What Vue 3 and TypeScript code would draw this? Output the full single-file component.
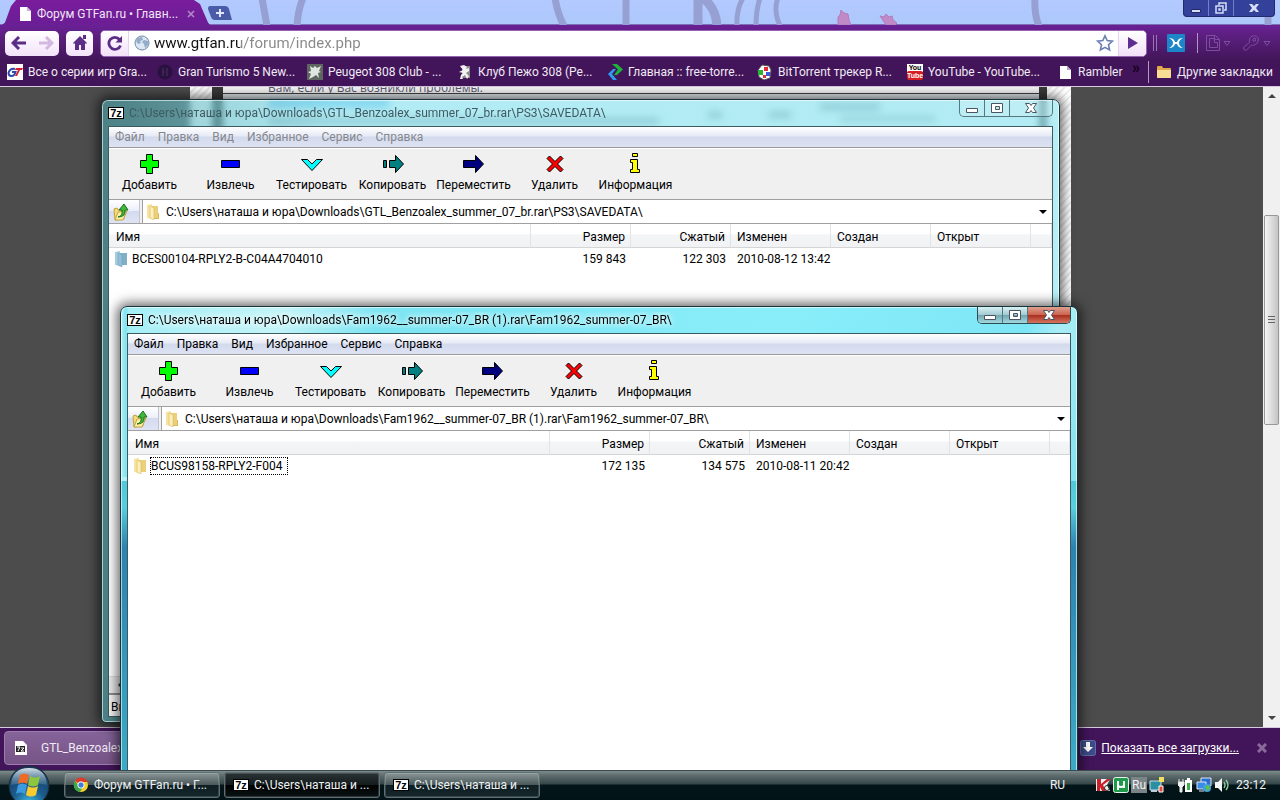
<script setup lang="ts">
import { ref } from 'vue'

interface Bookmark { icon: string; label: string }
interface ArchiveWindow {
  id: string
  active: boolean
  path: string
  folder: string
  size: string
  packed: string
  modified: string
}

const url = ref('www.gtfan.ru/forum/index.php')

const bookmarks: Bookmark[] = [
  { icon: 'gt', label: 'Все о серии игр Gra...' },
  { icon: 'gt5', label: 'Gran Turismo 5 New...' },
  { icon: 'peugeot', label: 'Peugeot 308 Club - ...' },
  { icon: 'lion', label: 'Клуб Пежо 308 (Pe...' },
  { icon: 'free', label: 'Главная :: free-torre...' },
  { icon: 'bit', label: 'BitTorrent трекер R...' },
  { icon: 'youtube', label: 'YouTube - YouTube...' },
  { icon: 'page', label: 'Rambler' },
]

const windows = ref<ArchiveWindow[]>([
  {
    id: 'savedata',
    active: false,
    path: 'C:\\Users\\наташа и юра\\Downloads\\GTL_Benzoalex_summer_07_br.rar\\PS3\\SAVEDATA\\',
    folder: 'BCES00104-RPLY2-B-C04A4704010',
    size: '159 843',
    packed: '122 303',
    modified: '2010-08-12 13:42',
  },
  {
    id: 'fam',
    active: true,
    path: 'C:\\Users\\наташа и юра\\Downloads\\Fam1962__summer-07_BR (1).rar\\Fam1962_summer-07_BR\\',
    folder: 'BCUS98158-RPLY2-F004',
    size: '172 135',
    packed: '134 575',
    modified: '2010-08-11 20:42',
  },
])

const menu = ['Файл', 'Правка', 'Вид', 'Избранное', 'Сервис', 'Справка']
const tools = [
  { icon: 'add', label: 'Добавить' },
  { icon: 'extract', label: 'Извлечь' },
  { icon: 'test', label: 'Тестировать' },
  { icon: 'copy', label: 'Копировать' },
  { icon: 'move', label: 'Переместить' },
  { icon: 'delete', label: 'Удалить' },
  { icon: 'info', label: 'Информация' },
]
const tasks = [
  { icon: 'chrome', label: 'Форум GTFan.ru • Г...', active: false },
  { icon: '7z', label: 'C:\\Users\\наташа и ...', active: true },
  { icon: '7z', label: 'C:\\Users\\наташа и ...', active: false },
]
</script>

<template>
  <div class="desktop">
    <div class="workspace">
      <section class="browser">
        <header class="tabstrip">
          <svg class="vines" width="1280" height="25" viewBox="0 0 1280 25" fill="none" aria-hidden="true">
            <g stroke="#97a0d2" stroke-width="7">
              <path d="M262 -2L267 26M303 -2Q298 10 297 26M555 -2Q557 12 564 26M626 -2V26M1035 -2Q1034 14 1039 26M1268 16V26" />
              <path d="M698 -2V26M703 -2Q716 8 717 26" stroke-width="9" />
              <path d="M743 -2Q736 10 737 26M760 -2Q756 10 756 26M778 -2Q773 10 780 26" stroke-width="5" />
            </g>
            <g fill="#c08ac6" stroke="#b07cc0">
              <path d="M838 25v-8l2-2 1-5 3 3 4 1 1 6 2 5zM880 16l4 1 2-3 3 3 3-1 1 4 4 3-2 2h-9z" />
            </g>
          </svg>
          <div class="tab">
            <svg width="16" height="16" viewBox="0 0 16 16" aria-hidden="true"><path d="M3 1h7l4 4v10H3z" fill="#fff" /><path d="M10 1l4 4h-4z" fill="#c9b4d6" /></svg>
            <span class="tab-label">Форум GTFan.ru • Главн...</span>
            <button class="plain" aria-label="Закрыть вкладку">
              <svg width="8" height="8" viewBox="0 0 8 8"><path d="M1 1l6 6M7 1L1 7" stroke="#b38ac9" stroke-width="1.6" /></svg>
            </button>
          </div>
          <button class="new-tab" aria-label="Новая вкладка">
            <svg width="24" height="14" viewBox="0 0 24 14"><path d="M2 0h15q3 0 4 3l3 11H7q-3 0-4-3L0 3q0-3 2-3z" fill="#4a5ca8" /><path d="M12 3v8M8 7h8" stroke="#dfe5fb" stroke-width="2" /></svg>
          </button>
          <div class="sys-buttons">
            <button aria-label="Свернуть"><svg width="12" height="12" viewBox="0 0 12 12"><path d="M1.500 7.500h9v3h-9z" fill="#d5dcf5" stroke="#20296a" /></svg></button>
            <button aria-label="Восстановить"><svg width="12" height="12" viewBox="0 0 12 12" fill="none" stroke="#d5dcf5" stroke-width="1.500"><path d="M4 3V1h7v7H9" /><path d="M1 4h7v7H1zM4 7h1v1H4z" /></svg></button>
            <button class="wide" aria-label="Закрыть"><svg width="12" height="12" viewBox="0 0 12 12"><path d="M1 2h3l2 2 2-2h3L8 6l3 4H8L6 8l-2 2H1l3-4z" fill="#d5dcf5" /></svg></button>
          </div>
        </header>

        <div class="toolbar">
          <div class="pill">
            <button aria-label="Назад"><svg width="16" height="14" viewBox="0 0 16 14"><path d="M8 1L2 7l6 6M2 7h13" fill="none" stroke="#5b2d86" stroke-width="3" /></svg></button>
            <button aria-label="Вперёд"><svg width="16" height="14" viewBox="0 0 16 14"><path d="M8 1l6 6-6 6M14 7H1" fill="none" stroke="#d3b8e2" stroke-width="3" /></svg></button>
          </div>
          <button class="pill home" aria-label="Домашняя страница">
            <svg width="16" height="16" viewBox="0 0 16 16"><path d="M8 1l7 7-1 1-1-1v7H9v-5H7v5H3V8L2 9 1 8zM11 0h3v4h-3z" fill="#5b2d86" /></svg>
          </button>
          <form class="omnibox" @submit.prevent>
            <button type="button" class="seg reload" aria-label="Обновить">
              <svg width="16" height="16" viewBox="0 0 16 16"><path d="M12.500 4.500A6 6 0 1 0 13.500 10.500" fill="none" stroke="#5b2d86" stroke-width="2.800" /><path d="M15 1v6.500H8.500z" fill="#5b2d86" /></svg>
            </button>
            <svg width="16" height="16" viewBox="0 0 16 16" aria-hidden="true"><circle cx="8" cy="8" r="7" fill="#dce9f5" stroke="#7188a5" /><path d="M3 3l5-1 1 3-3 1 1 2-3 1-2-3zM10 5l4 1v4l-3 3-1-4-2-2z" fill="#93adc8" /></svg>
            <input v-model="url" class="url" type="text" aria-label="Адрес" />
            <button type="button" class="plain" aria-label="Добавить закладку">
              <svg width="18" height="18" viewBox="0 0 18 18"><path d="M9 1.800l2.200 4.800 5.200.6-3.900 3.500 1.100 5.200L9 13.300l-4.600 2.600 1.100-5.200L1.600 7.200l5.200-.6z" fill="#fff" stroke="#6d7fb5" stroke-width="1.600" /></svg>
            </button>
            <button type="submit" class="seg go" aria-label="Перейти">
              <svg width="10" height="12" viewBox="0 0 10 12"><path d="M0 0l10 6-10 6z" fill="#5f2d91" /></svg>
            </button>
          </form>
          <span class="bars"></span>
          <button class="plain ext" aria-label="Расширение">
            <svg width="18" height="18" viewBox="0 0 18 18"><rect width="18" height="18" rx="1" fill="#1d86c8" /><path d="M2 4q5 0 6 4h2q1-4 6-4-4 2-4 5t4 5q-5 0-6-4H8q-1 4-6 4 4-2 4-5T2 4z" fill="#fff" /></svg>
          </button>
          <span class="bar"></span>
          <button class="plain" aria-label="Страница">
            <svg width="27" height="16" viewBox="0 0 27 16" fill="none" stroke="#7d4d9e"><path d="M1.500.5h9l4 4v11h-13z" /><path d="M4.500 3.500h5v4h3v5h-8zM9.500.5v4h5M19 6.500h6l-3 4z" /></svg>
          </button>
          <button class="plain" aria-label="Настройки">
            <svg width="29" height="16" viewBox="0 0 29 16" fill="none" stroke="#7d4d9e"><path d="M1.500 12.500l6-5q-1-5 3-6.500 5-1 6 3 0 5-4 6-2 .5-3 0l-5 5q-3 1-3-2.500zM11 4l2-1 1 2-1 1-2 0zM22 6.500h6l-3 4z" /></svg>
          </button>
        </div>

        <nav class="bookmarks">
          <a v-for="b in bookmarks" :key="b.label" href="#" class="bookmark">
            <svg width="16" height="16" viewBox="0 0 16 16" aria-hidden="true">
              <template v-if="b.icon === 'gt'"><rect width="16" height="16" fill="#fff" /><path d="M8 5Q3 4 1.500 9q0 3 3 3 3 0 4-4H5" fill="none" stroke="#2a4aa8" stroke-width="2" /><path d="M9 4h7l-1 2h-2l-3 6H8l3-6H8z" fill="#d8202c" /></template>
              <template v-else-if="b.icon === 'gt5'"><circle cx="8" cy="8" r="7.500" fill="#2b1042" /><path d="M6 4v8M10 4v8M6 8h2" stroke="#43285a" stroke-width="1.500" /></template>
              <template v-else-if="b.icon === 'peugeot'"><rect width="16" height="16" fill="#5f665f" /><path d="M3 2l3 2 2-2 2 2 4-2-2 5 2 1-3 1 1 5-3-3-3 2-4 2 2-5-3-2 3-1z" fill="#dfe5df" /></template>
              <template v-else-if="b.icon === 'lion'"><path d="M5 2h8v12H5z" fill="#8a8a8a" /><path d="M3 2l4-1 3 2-1 2 3-1v3l-3 2 3 3-2 3-2-4-3 2 1 2H3l1-4 2-2-4-1 4-2z" fill="#f2f2f2" /></template>
              <template v-else-if="b.icon === 'free'"><path d="M5 0h5l6 5.500L10 11H7l4-5.500z" fill="#1db43a" /><path d="M6 5h3L5 10l5 6H6L1 10z" fill="#2f9bf0" /></template>
              <template v-else-if="b.icon === 'bit'"><path d="M5 1l7 1 2 4-1 8-6 2-5-3-1-7z" fill="#fff" stroke="#555" /><path d="M1 6h5v5H1z" fill="#29b332" /><path d="M7 3h4v4H7z" fill="#e02b34" /><path d="M9 8h4v4H9z" fill="#3b5bd8" /><path d="M6 11h3v3H6z" fill="#d33" /></template>
              <template v-else-if="b.icon === 'youtube'"><rect width="16" height="8" fill="#fff" /><rect y="7" width="16" height="9" rx="2" fill="#d81f1f" /><text x="8" y="6" class="yt" fill="#000">You</text><text x="8" y="14" class="yt" fill="#fff">Tube</text></template>
              <template v-else><path d="M3 2h7l4 4v9H3z" fill="#fff" /><path d="M10 2l4 4h-4z" fill="#b7a2c5" /></template>
            </svg>
            <span>{{ b.label }}</span>
          </a>
          <button class="plain more" aria-label="Ещё закладки">»</button>
          <span class="bar"></span>
          <a href="#" class="bookmark other">
            <svg width="16" height="16" viewBox="0 0 16 16" aria-hidden="true"><path d="M1 3q0-1 1-1h4l1 2h7q1 0 1 1v8q0 1-1 1H2q-1 0-1-1z" fill="#e2a94a" /><path d="M1 6h14v7q0 1-1 1H2q-1 0-1-1z" fill="#fbdc95" /></svg>
            <span>Другие закладки</span>
          </a>
        </nav>

        <main class="viewport">
          <div class="page">
            <div class="content">
              <p class="notice">Вам, если у Вас возникли проблемы.</p>
              <div class="forum-row">
                <i class="b-link"></i><i class="b-text"></i><i class="b-num"></i><i class="b-num second"></i><i class="b-author"></i>
              </div>
            </div>
          </div>
          <div class="scrollbar">
            <svg width="8" height="5" viewBox="0 0 8 5"><path d="M0 5l4-4 4 4z" fill="#444" /></svg>
            <span class="thumb"></span>
            <svg width="8" height="5" viewBox="0 0 8 5"><path d="M0 0l4 4 4-4z" fill="#444" /></svg>
          </div>
        </main>

        <footer class="downloads">
          <button class="download">
            <svg width="16" height="16" viewBox="0 0 16 16" aria-hidden="true"><path d="M2 1h8l4 4v10H2z" fill="#fff" /><path d="M3 6h9v6H3z" fill="#222" /><path d="M4 7h3l-2 4M8 8h3l-3 3h3" stroke="#fff" fill="none" /></svg>
            <span>GTL_Benzoalex</span>
          </button>
          <div class="all">
            <svg width="16" height="16" viewBox="0 0 16 16" aria-hidden="true"><rect x=".5" y=".5" width="15" height="15" rx="2" fill="#3c4c8c" stroke="#6070a0" /><path d="M6 2h4v5h3l-5 5-5-5h3z" fill="#fff" /></svg>
            <a href="#">Показать все загрузки...</a>
            <button class="plain" aria-label="Закрыть панель загрузок"><svg width="10" height="10" viewBox="0 0 10 10"><path d="M1 1l8 8M9 1L1 9" stroke="#8a6a9a" stroke-width="3" /></svg></button>
          </div>
        </footer>
      </section>

      <section v-for="w in windows" :key="w.id" class="window" :class="[w.id, { active: w.active }]">
        <header class="title">
          <span class="sevenz" aria-hidden="true">7z</span>
          <h2>{{ w.path }}</h2>
          <div class="caption">
            <button aria-label="Свернуть"><svg width="14" height="12" viewBox="0 0 14 12"><path d="M1.500 6.500h11v4h-11z" fill="#fff" stroke="#4b5560" /></svg></button>
            <button aria-label="Развернуть"><svg width="14" height="12" viewBox="0 0 14 12"><path d="M1.500 1.500h11v9h-11zM5.500 4.500v3h4v-3z" fill="#fff" fill-rule="evenodd" stroke="#4b5560" /></svg></button>
            <button class="close" aria-label="Закрыть"><svg width="14" height="12" viewBox="0 0 14 12"><path d="M1.500 1.500h4L7 3.500l1.500-2h4L9.500 6l3 4.500h-4L7 8.500l-1.500 2h-4l3-4.500z" fill="#fff" stroke="#4b5560" /></svg></button>
          </div>
        </header>
        <div class="client">
          <nav class="menu"><button v-for="m in menu" :key="m">{{ m }}</button></nav>
          <div class="tools">
            <button v-for="t in tools" :key="t.icon">
              <svg width="24" height="24" viewBox="0 0 24 24" stroke="#000" aria-hidden="true">
                <path v-if="t.icon === 'add'" d="M8.500 2.500h6v6h6v7h-6v6h-6v-6h-6v-7h6z" fill="#0f0" />
                <path v-else-if="t.icon === 'extract'" d="M2.500 8.500h18v7h-18z" fill="#00f" />
                <path v-else-if="t.icon === 'test'" d="M1.500 7.500h6l4.500 4.500 4.500-4.500h6L12 18.500z" fill="#0ff" />
                <path v-else-if="t.icon === 'copy'" d="M2.500 8.500h3v7h-3zM8.500 8.500h6v-5l8 8.500-8 8.500v-5h-6z" fill="#008080" />
                <path v-else-if="t.icon === 'move'" d="M1.500 8.500h12v-5l8 8.500-8 8.500v-5h-12z" fill="#000080" />
                <path v-else-if="t.icon === 'delete'" d="M4 6.500L6.500 4l5.500 5.500L17.500 4 20 6.500 14.500 12l5.500 5.500-2.500 2.500-5.500-5.500L6.500 20 4 17.500 9.500 12z" fill="#f00" />
                <path v-else d="M8.500 1.500h5v3h-5zM6.500 7.500h7v10h2v3h-9v-3h2v-7h-2z" fill="#ff0" />
              </svg>
              <span>{{ t.label }}</span>
            </button>
          </div>
          <div class="address">
            <button class="up" aria-label="Вверх">
              <svg width="18" height="18" viewBox="0 0 18 18"><path d="M2 6l3-1 1 2h6v9l-9 1z" fill="#f4dc7c" stroke="#c4a23c" /><path d="M3 17l3-8 9-1-4 9z" fill="#fcf0a8" stroke="#c4a23c" /><path d="M6 14q5-1 4-7H7l5-6 4 6h-3q1 7-7 7z" fill="#3cb83c" stroke="#1c701c" /></svg>
            </button>
            <label class="combo">
              <svg width="16" height="16" viewBox="0 0 16 16" aria-hidden="true"><path d="M2 1l5-1v15l-5-1z" fill="#f7e3a0" /><path d="M7 2h6v12H7z" fill="#eccf79" /><path d="M5 2l4 2v12l-4-2z" fill="#fbeebf" stroke="#dcb95c" stroke-width=".6" /><path d="M13 9h1v6H9v-1h4z" fill="#d9b75f" /></svg>
              <input v-model="w.path" type="text" aria-label="Путь" />
              <button type="button" class="plain" aria-label="Список папок"><svg width="8" height="4" viewBox="0 0 8 4"><path d="M0 0h8L4 4z" fill="#000" /></svg></button>
            </label>
          </div>
          <div class="list">
            <table>
              <colgroup><col class="c-name" /><col v-for="n in 5" :key="n" class="c-data" /><col /></colgroup>
              <thead><tr><th>Имя</th><th class="num">Размер</th><th class="num">Сжатый</th><th>Изменен</th><th>Создан</th><th>Открыт</th><th></th></tr></thead>
              <tbody>
                <tr>
                  <td>
                    <div class="entry">
                      <svg width="14" height="16" viewBox="0 0 14 16" aria-hidden="true">
                        <path d="M1 1l5-1v15l-5-1z" :fill="w.active ? '#f7e3a0' : '#a5cde0'" /><path d="M6 2h7v12H6z" :fill="w.active ? '#eccf79' : '#7fb0c8'" /><path d="M4 2l4 2v12l-4-2z" :fill="w.active ? '#fbeebf' : '#94bfd6'" :stroke="w.active ? '#dcb95c' : '#6fa3bd'" stroke-width=".6" />
                      </svg>
                      <span>{{ w.folder }}</span>
                    </div>
                  </td>
                  <td class="num">{{ w.size }}</td><td class="num">{{ w.packed }}</td><td>{{ w.modified }}</td><td></td><td></td><td></td>
                </tr>
              </tbody>
            </table>
          </div>
          <div class="hscroll"><svg width="5" height="8" viewBox="0 0 5 8"><path d="M5 0v8L1 4z" fill="#333" /></svg></div>
          <div class="status">Выделено</div>
        </div>
      </section>
    </div>

    <footer class="taskbar">
      <button class="start" aria-label="Пуск">
        <svg width="42" height="42" viewBox="0 0 42 42">
          <defs>
            <radialGradient id="orb" cx=".5" cy=".95" r=".9"><stop offset="0" stop-color="#3ec0e8" /><stop offset=".45" stop-color="#1b5c8e" /><stop offset="1" stop-color="#16395c" /></radialGradient>
            <linearGradient id="gloss" x2="0" y2="1"><stop offset="0" stop-color="#eaf3f8" stop-opacity=".9" /><stop offset="1" stop-color="#8fb0c8" stop-opacity=".25" /></linearGradient>
          </defs>
          <circle cx="21" cy="21" r="20" fill="url(#orb)" stroke="#1c2c34" />
          <path d="M3 20Q4 3 21 3t18 17Q21 15 3 20z" fill="url(#gloss)" />
          <path d="M12 10q4-3 9 0l-2 9q-4-3-9 0z" fill="#ee6a26" /><path d="M22 11q5 3 10 0l-2 9q-5 3-10 0z" fill="#8cc63c" />
          <path d="M10 20q4-3 9 0l-2 9q-5-3-9 0z" fill="#3b9ae0" /><path d="M20 21q5 3 10 0l-2 9q-5 3-10 0z" fill="#fccb2e" />
        </svg>
      </button>
      <button v-for="(t, i) in tasks" :key="i" class="task" :class="{ pressed: t.active }">
        <svg v-if="t.icon === 'chrome'" width="16" height="16" viewBox="0 0 16 16" aria-hidden="true"><circle cx="8" cy="8" r="7" fill="#f8d02c" /><path d="M8 8L2 4a7 7 0 0 1 12.500 1H8z" fill="#dc3a2c" /><path d="M2 4a7 7 0 0 0 5 11l3-5-4-1z" fill="#3ea648" /><circle cx="8" cy="8" r="3.200" fill="#3d7fd8" stroke="#fff" /></svg>
        <span v-else class="sevenz" aria-hidden="true">7z</span>
        <span>{{ t.label }}</span>
      </button>
      <span class="lang">RU</span>
      <div class="tray">
        <svg width="16" height="16" viewBox="0 0 16 16" aria-hidden="true"><path d="M1 2h14l-3 6 3 6H1z" fill="#f2f2f2" /><path d="M2 2h4v5l6-5h4L8 8l3 6H7L5 10v4H2z" fill="#c8202a" /><circle cx="12" cy="11" r="2.500" fill="none" stroke="#333" /></svg>
        <svg width="16" height="16" viewBox="0 0 16 16" aria-hidden="true"><rect x=".5" y=".5" width="15" height="15" rx="2" fill="#1f9a4a" stroke="#e8f5ec" /><path d="M5 4v9M5 4v4q0 2 3 2t3-2V4v6h1" fill="none" stroke="#fff" stroke-width="2" /></svg>
        <span class="ru">Ru</span>
        <svg width="16" height="16" viewBox="0 0 16 16" aria-hidden="true"><path d="M1 4h11v9H1z" fill="#2a8fa0" stroke="#cde" /><path d="M10 0h5v5h-5z" fill="#f0e060" /><path d="M10 9h4v6h-4z" fill="#e04a30" stroke="#fff" /><path d="M2 14h6" stroke="#bcd" stroke-width="2" /></svg>
        <svg class="apart" width="16" height="16" viewBox="0 0 16 16" aria-hidden="true"><path d="M7 3h2V1h3v2h2v12H7z" fill="#fff" /><path d="M9 6h3v7H9z" fill="#3fae4c" /><path d="M1 2v3M5 2v3M0 5h6v3L4 10v5H2v-5L0 8z" fill="#f2f2f2" stroke="#e8e8e8" /></svg>
        <svg width="16" height="16" viewBox="0 0 16 16" aria-hidden="true"><path d="M5 1h10v8H5z" fill="#2a6fd0" stroke="#dfe8f5" /><path d="M1 5h9v7H1zM3 14h5" fill="#3a8be8" stroke="#dfe8f5" /><circle cx="11" cy="11" r="4" fill="#3fa0e0" /><path d="M9 9l4-1 1 4-3 2z" fill="#5cc04a" /></svg>
        <svg width="16" height="16" viewBox="0 0 16 16" aria-hidden="true"><path d="M1 5h3l4-4v14l-4-4H1z" fill="#f2f5f5" /><path d="M10 5q2 3 0 6M12 3q4 5 0 10" fill="none" stroke="#8fd6a0" stroke-width="1.300" /></svg>
      </div>
      <time>23:12</time>
    </footer>
  </div>
</template>

<style>
body { margin: 0; overflow: hidden; background: #4c4c4c; }
</style>

<style scoped>
* { box-sizing: border-box; }
button { font: inherit; color: inherit; border: 0; background: none; padding: 0; margin: 0; display: flex; align-items: center; justify-content: center; }
svg { display: block; flex: none; }
.desktop { height: 100vh; display: flex; flex-direction: column; overflow: hidden; font: 12px/16px Roboto, "Noto Sans", sans-serif; color: #000; white-space: nowrap; }
.workspace { flex: 1; min-height: 0; position: relative; overflow: hidden; }
.browser { height: 100%; display: flex; flex-direction: column; }

.tabstrip { height: 25px; flex: none; display: flex; position: relative; padding-left: 2px; background: linear-gradient(#b3c9ff, #adc8fb); border-bottom: 1px solid #7a6fb4; }
.vines { position: absolute; left: 0; top: 0; }
.tab { position: relative; width: 208px; height: 25px; padding: 2px 15px 0 15px; display: flex; align-items: center; gap: 4px; color: #f0e6f7; background: linear-gradient(#7a1c9c, #6b1e95); clip-path: polygon(0 100%, 3px 90%, 9px 6px, 14px 0, 192px 0, 198px 4px, 206px 90%, 100% 100%); }
.tab-label { flex: 1; overflow: hidden; }
.new-tab { position: relative; align-self: flex-start; margin-top: 6px; margin-left: -2px; }
.sys-buttons { position: relative; margin-left: auto; margin-right: 5px; height: 17px; display: flex; background: #33419a; border: 1px solid #1f2a70; border-top: 0; border-radius: 0 0 4px 4px; }
.sys-buttons button { width: 25px; border-right: 1px solid #7480c4; }
.sys-buttons .wide { width: 40px; border: 0; }

.toolbar { flex: none; height: 35px; padding: 4px 9px 3px 5px; display: flex; align-items: center; background: linear-gradient(#6b2096, #5c1f80 30%, #42165a); }
.pill { height: 25px; display: flex; border-radius: 5px; background: linear-gradient(#fff, #f3e3fa); margin-right: 7px; }
.pill button { width: 27px; }
.home { width: 27px; }
.omnibox { flex: 1; height: 27px; display: flex; align-items: center; background: #fff; border: 1px solid #9463b4; border-radius: 5px; overflow: hidden; }
.seg { width: 28px; height: 100%; background: linear-gradient(#fff, #f3e0fa); }
.reload { border-right: 1px solid #e4d3ee; margin-right: 5px; }
.go { border-left: 1px solid #e4d3ee; margin-left: 4px; }
.url { flex: 1; min-width: 0; border: 0; outline: 0; padding: 0; margin-left: 4px; height: 23px; font: 15px/22px Roboto, "Noto Sans", sans-serif; color: transparent; background: linear-gradient(90deg, #111 86px, #888 86px); -webkit-background-clip: text; background-clip: text; }
.bars { width: 4px; height: 16px; margin: 0 10px 0 6px; border: solid #9a74b0; border-width: 0 1px; }
.ext { margin-right: 12px; }
.bar { width: 1px; height: 20px; background: #b496c4; margin-right: 7px; }
.toolbar .plain + .plain { margin-left: 10px; }

.bookmarks { flex: none; height: 26px; padding: 0 7px 2px; display: flex; align-items: center; background: #42155a; color: #f1eaf5; }
.bookmark { width: 150px; display: flex; align-items: center; gap: 5px; color: inherit; text-decoration: none; }
.bookmark:nth-child(8) { width: auto; margin-right: auto; }
.more { align-self: flex-start; color: #160020; font-size: 16px; font-weight: 700; margin-right: 8px; }
.bookmarks .bar { height: 22px; }
.other { width: auto; }
.yt { font: 700 7px "Liberation Sans", sans-serif; text-anchor: middle; }

.viewport { flex: 1; min-height: 0; display: flex; background: #4c4c4c; border-top: 1px solid #d8c8e0; }
.page { width: 881px; margin-left: 190px; padding: 0 24px 0 22px; background: repeating-linear-gradient(135deg, #fff 0 3px, #ececec 3px 5px); overflow: hidden; }
.content { height: 100%; background: #fff; border: solid #3a3a3a; border-width: 0 8px 0 11px; }
.notice { margin: 0; height: 7px; padding-left: 45px; overflow: hidden; font-family: "Open Sans", "Noto Sans", sans-serif; line-height: 1px; color: #5a5a70; border-bottom: 1px solid #444; background: #f7f7f7; }
.forum-row { position: relative; height: 40px; background: #e6edf2; }
.forum-row i { position: absolute; height: 6px; filter: blur(2px); background: #7d9099; }
.forum-row .b-link { left: 46px; top: 7px; width: 120px; background: #3aa0e0; }
.forum-row .b-text { left: 46px; top: 24px; width: 390px; }
.forum-row .b-num { left: 485px; top: 18px; width: 14px; }
.forum-row .b-num.second { left: 546px; width: 22px; }
.forum-row .b-author { left: 597px; top: 10px; width: 60px; box-shadow: 20px 12px 0 #9aacb4, 55px 12px 0 #9aacb4; }
.scrollbar { width: 17px; margin-left: auto; padding: 6px 0; display: flex; flex-direction: column; align-items: center; background: #f0f0f0; }
.thumb { width: 15px; height: 210px; margin: 117px 0 auto; border: 1px solid #989898; border-radius: 2px; background: repeating-linear-gradient(#666 0 1px, transparent 1px 3px) center / 7px 8px no-repeat, linear-gradient(90deg, #f5f5f5, #dcdcdc 50%, #c4c4c8); }

.downloads { flex: none; height: 43px; padding: 3px 13px 5px 4px; display: flex; align-items: center; background: #42155a; border-top: 1px solid #d8c8e0; }
.download { width: 220px; height: 34px; padding-left: 8px; justify-content: flex-start; gap: 12px; background: linear-gradient(#85649a, #775486); border: 1px solid #9b7cae; border-radius: 4px; color: #f1eaf5; }
.all { margin-left: auto; display: flex; align-items: center; gap: 5px; }
.all a { color: #fff; margin-right: 13px; }

.window { position: absolute; padding: 0 6px 5px; display: flex; flex-direction: column; border: 1px solid #16343a; border-radius: 7px 7px 5px 5px; box-shadow: inset 0 0 0 1px rgba(255, 255, 255, .6), 0 0 12px 3px rgba(0, 0, 0, .6); }
.savedata { left: 101px; right: 220px; top: 99px; bottom: 47px; background: linear-gradient(90deg, rgba(76, 165, 172, .6), rgba(150, 234, 244, .66) 24%); backdrop-filter: blur(3px); }
.fam { left: 120px; right: 202px; top: 306px; bottom: -50px; background: linear-gradient(90deg, #b4eef4, #7ee4f0 5px, transparent 8px) 0 0 / 100% 170px no-repeat, linear-gradient(115deg, #a2eef6 0, #c4f4f8 150px, #7de4f2 240px, #8aeefa 600px, #7de6f6 830px, #a8edf6 860px, #84e2f0) 0 0 / 100% 174px no-repeat, linear-gradient(#2c9cbc, #58cfdc 200px, #2c83b0 240px, #40b4cc); }
.title { flex: none; height: 26px; display: flex; align-items: center; gap: 5px; }
.title h2 { flex: 1; margin: 0; font: inherit; color: #3f5a62; overflow: hidden; }
.active .title h2 { color: #000; text-shadow: 0 0 6px #fff, 0 0 6px #fff; }
.sevenz { width: 16px; height: 12px; border: 1px solid #000; background: #fff; color: #000; font: 700 11px/10px "Liberation Sans", sans-serif; text-align: center; }
.caption { align-self: flex-start; display: flex; height: 17px; border: 1px solid #55777f; border-top: 0; border-radius: 0 0 5px 5px; overflow: hidden; }
.caption button { width: 25px; border-right: 1px solid #55777f; background: rgba(255, 255, 255, .15); }
.caption .close { width: 42px; border: 0; }
.active .caption { border-color: #2c4c54; }
.active .caption button { background: linear-gradient(#d8f2f5, #a4cbd2 48%, #6fa4ae 50%, #a4d8e0); }
.active .caption .close { background: linear-gradient(#e0a090, #cc6450 48%, #a82c1c 50%, #d47460); }

.client { flex: 1; min-height: 0; display: flex; flex-direction: column; background: #fff; border: 1px solid #3c5a62; }
.menu { flex: none; height: 21px; display: flex; background: linear-gradient(#fff, #e6eaf5 45%, #d3daed 50%, #dde3f3); border-bottom: 1px solid #9a9a9a; color: #000; }
.menu button { padding: 0 7px 0 6px; }
.savedata .menu { color: #85878c; }
.tools { flex: none; height: 51px; display: flex; padding-top: 3px; background: #f0f0f0; border-top: 1px solid #fff; }
.tools button { width: 81px; flex-direction: column; justify-content: flex-start; gap: 1px; }
.address { flex: none; height: 25px; display: flex; gap: 2px; background: #f0f0f0; border: solid #a0a0a0; border-width: 1px 0; }
.up { width: 31px; padding-right: 6px; background: linear-gradient(#fff, #eef0fa 45%, #d5dbef 50%, #dfe4f4); border-right: 1px solid #c0c4d4; }
.combo { flex: 1; display: flex; align-items: center; gap: 5px; padding: 0 5px 0 2px; background: #fff; border-left: 1px solid #a0a0a0; }
.combo input { flex: 1; min-width: 0; height: 20px; padding: 0; border: 0; outline: 0; font: inherit; color: #000; background: none; }
.list { flex: 1; min-height: 0; overflow: hidden; }
table { width: 100%; table-layout: fixed; border-collapse: separate; border-spacing: 0; }
.c-name { width: 422px; }
.c-data { width: 100px; }
th, td { height: 21px; padding: 0 5px 0 6px; text-align: left; font-weight: 400; overflow: hidden; }
th { height: 24px; padding-top: 3px; background: linear-gradient(#fff 45%, #f4f5f7 46%, #f1f2f4); border-right: 1px solid #e2e3e6; border-bottom: 1px solid #d5d5d5; }
th:first-child { padding-left: 7px; }
td:first-child { padding-left: 5px; }
.num { text-align: right; }
.entry { display: flex; align-items: center; gap: 3px; }
.entry span { padding: 0 5px 0 0; border: 1px dotted transparent; }
.active .entry span { border-color: #000; }
.hscroll { flex: none; height: 17px; padding: 4px 8px; background: #ececec; border-top: 1px solid #ddd; }
.status { flex: none; height: 23px; padding: 4px 2px; border-top: 2px solid #8c8c8c; background: #f5f5f5; }

.taskbar { position: relative; flex: none; height: 30px; padding: 2px 14px 2px 64px; display: flex; align-items: center; gap: 4px; color: #eef2f2; background: linear-gradient(#3a4a4e 0 1px, #7d8b8c 1px, #5b696b 6px, #36474a 14px, #04151a 15px, #021318); }
.start { position: absolute; left: 8px; top: -5px; }
.task { width: 156px; height: 26px; padding: 0 8px; justify-content: flex-start; gap: 5px; border: 1px solid #5f6f72; border-radius: 3px; background: linear-gradient(#8a9697, #4c5a5c 48%, #0e1e22 50%, #16272b); box-shadow: inset 0 0 0 1px rgba(255, 255, 255, .15); }
.task.pressed { background: linear-gradient(#2a3335, #151c1e 48%, #000 50%, #0a1214); }
.lang { margin-left: auto; margin-right: 26px; }
.tray { display: flex; align-items: center; gap: 2px; }
.ru { width: 16px; height: 16px; background: #7b8486; font-size: 12px; text-align: center; }
.apart { margin-left: 11px; }
time { margin-left: 2px; }
</style>
